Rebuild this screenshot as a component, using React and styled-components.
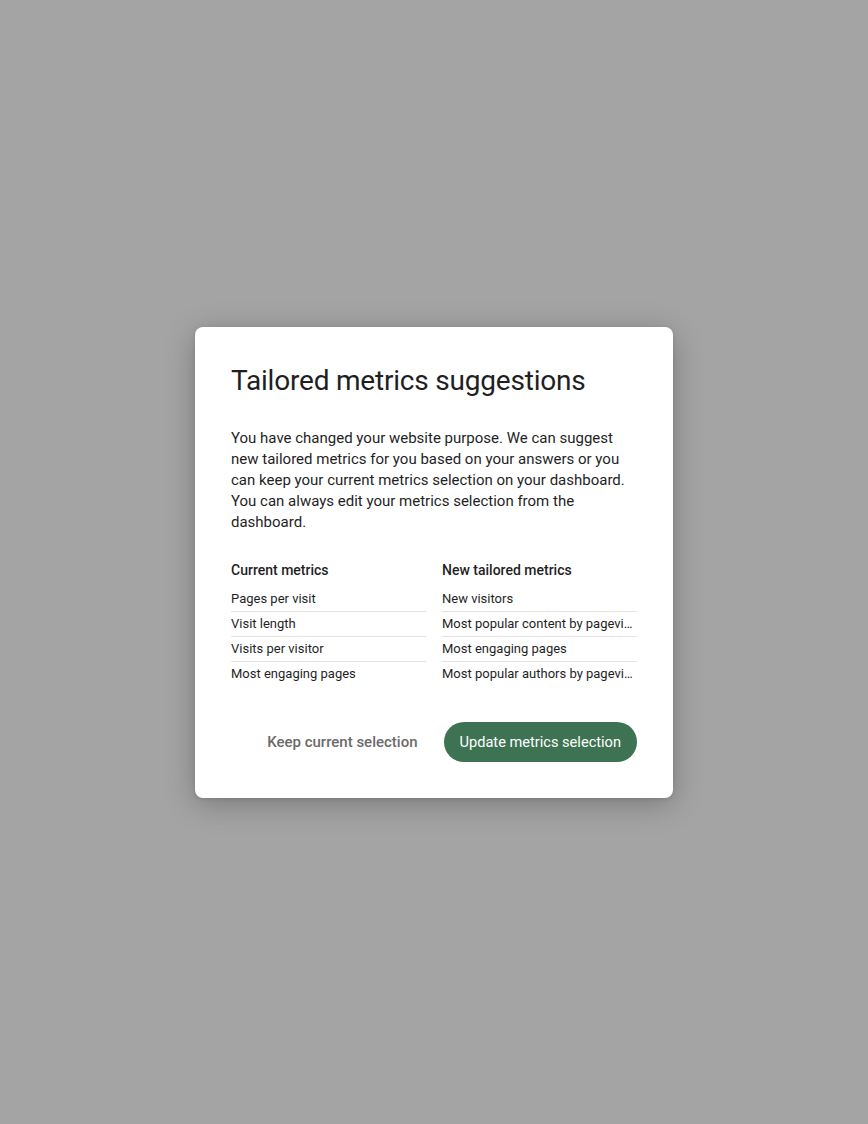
import React from 'react';
import styled, { createGlobalStyle } from 'styled-components';

const GlobalStyle = createGlobalStyle`
  html, body {
    margin: 0;
    padding: 0;
    height: 100%;
  }
  body {
    font-family: Roboto, "Liberation Sans", sans-serif;
    background: #a4a4a4;
  }
  #root {
    height: 100%;
  }
`;

const Backdrop = styled.div`
  width: 100%;
  height: 1124px;
  background: #a4a4a4;
  display: flex;
  align-items: center;
  justify-content: center;
`;

const Dialog = styled.div`
  width: 478px;
  box-sizing: border-box;
  padding: 36px;
  background: #fff;
  border-radius: 8px;
  box-shadow: 0 6px 30px rgba(0, 0, 0, 0.26), 0 1px 4px rgba(0, 0, 0, 0.1);
  display: flex;
  flex-direction: column;
`;

const Title = styled.h2`
  margin: 0;
  font-size: 28px;
  line-height: 36px;
  font-weight: 400;
  color: #1f1f1f;
  letter-spacing: -0.2px;
`;

const Body = styled.p`
  margin: 29px 0 0;
  font-size: 15px;
  line-height: 21px;
  color: #1f1f1f;
`;

const Columns = styled.div`
  margin-top: 27px;
  display: grid;
  grid-template-columns: 1fr 1fr;
  column-gap: 16px;
`;

const Column = styled.div`
  display: flex;
  flex-direction: column;
  min-width: 0;
`;

const ColumnTitle = styled.h3`
  margin: 0 0 7px;
  font-size: 14px;
  line-height: 20px;
  font-weight: 500;
  color: #1f1f1f;
`;

const MetricRow = styled.div`
  font-size: 13px;
  line-height: 24px;
  color: #1f1f1f;
  white-space: nowrap;
  overflow: hidden;
  text-overflow: ellipsis;
  border-bottom: 1px solid ${({ $last }) => ($last ? 'transparent' : '#e3e3e3')};
`;

const Actions = styled.div`
  margin-top: 35px;
  display: flex;
  justify-content: flex-end;
  align-items: center;
  gap: 10px;
`;

const TextButton = styled.button`
  border: none;
  background: transparent;
  font-family: inherit;
  font-size: 15px;
  font-weight: 500;
  color: #6b6b6b;
  height: 40px;
  padding: 0 16px;
  border-radius: 20px;
  cursor: pointer;
`;

const FilledButton = styled.button`
  border: none;
  background: #3d7352;
  color: #fff;
  font-family: inherit;
  font-size: 14.6px;
  font-weight: 400;
  height: 40px;
  padding: 0 16px;
  border-radius: 20px;
  cursor: pointer;
`;

const current = ['Pages per visit', 'Visit length', 'Visits per visitor', 'Most engaging pages'];
const tailored = [
  'New visitors',
  'Most popular content by pageviews',
  'Most engaging pages',
  'Most popular authors by pageviews',
];

const MetricList = ({ title, items }) => (
  <Column>
    <ColumnTitle>{title}</ColumnTitle>
    {items.map((item, i) => (
      <MetricRow key={item} $last={i === items.length - 1} title={item}>
        {item}
      </MetricRow>
    ))}
  </Column>
);

const App = () => {
  return (
    <>
      <GlobalStyle />
      <Backdrop>
        <Dialog>
          <Title>Tailored metrics suggestions</Title>
          <Body>
            You have changed your website purpose. We can suggest new tailored metrics for you
            based on your answers or you can keep your current metrics selection on your
            dashboard. You can always edit your metrics selection from the dashboard.
          </Body>
          <Columns>
            <MetricList title="Current metrics" items={current} />
            <MetricList title="New tailored metrics" items={tailored} />
          </Columns>
          <Actions>
            <TextButton>Keep current selection</TextButton>
            <FilledButton>Update metrics selection</FilledButton>
          </Actions>
        </Dialog>
      </Backdrop>
    </>
  );
};

export default App;
